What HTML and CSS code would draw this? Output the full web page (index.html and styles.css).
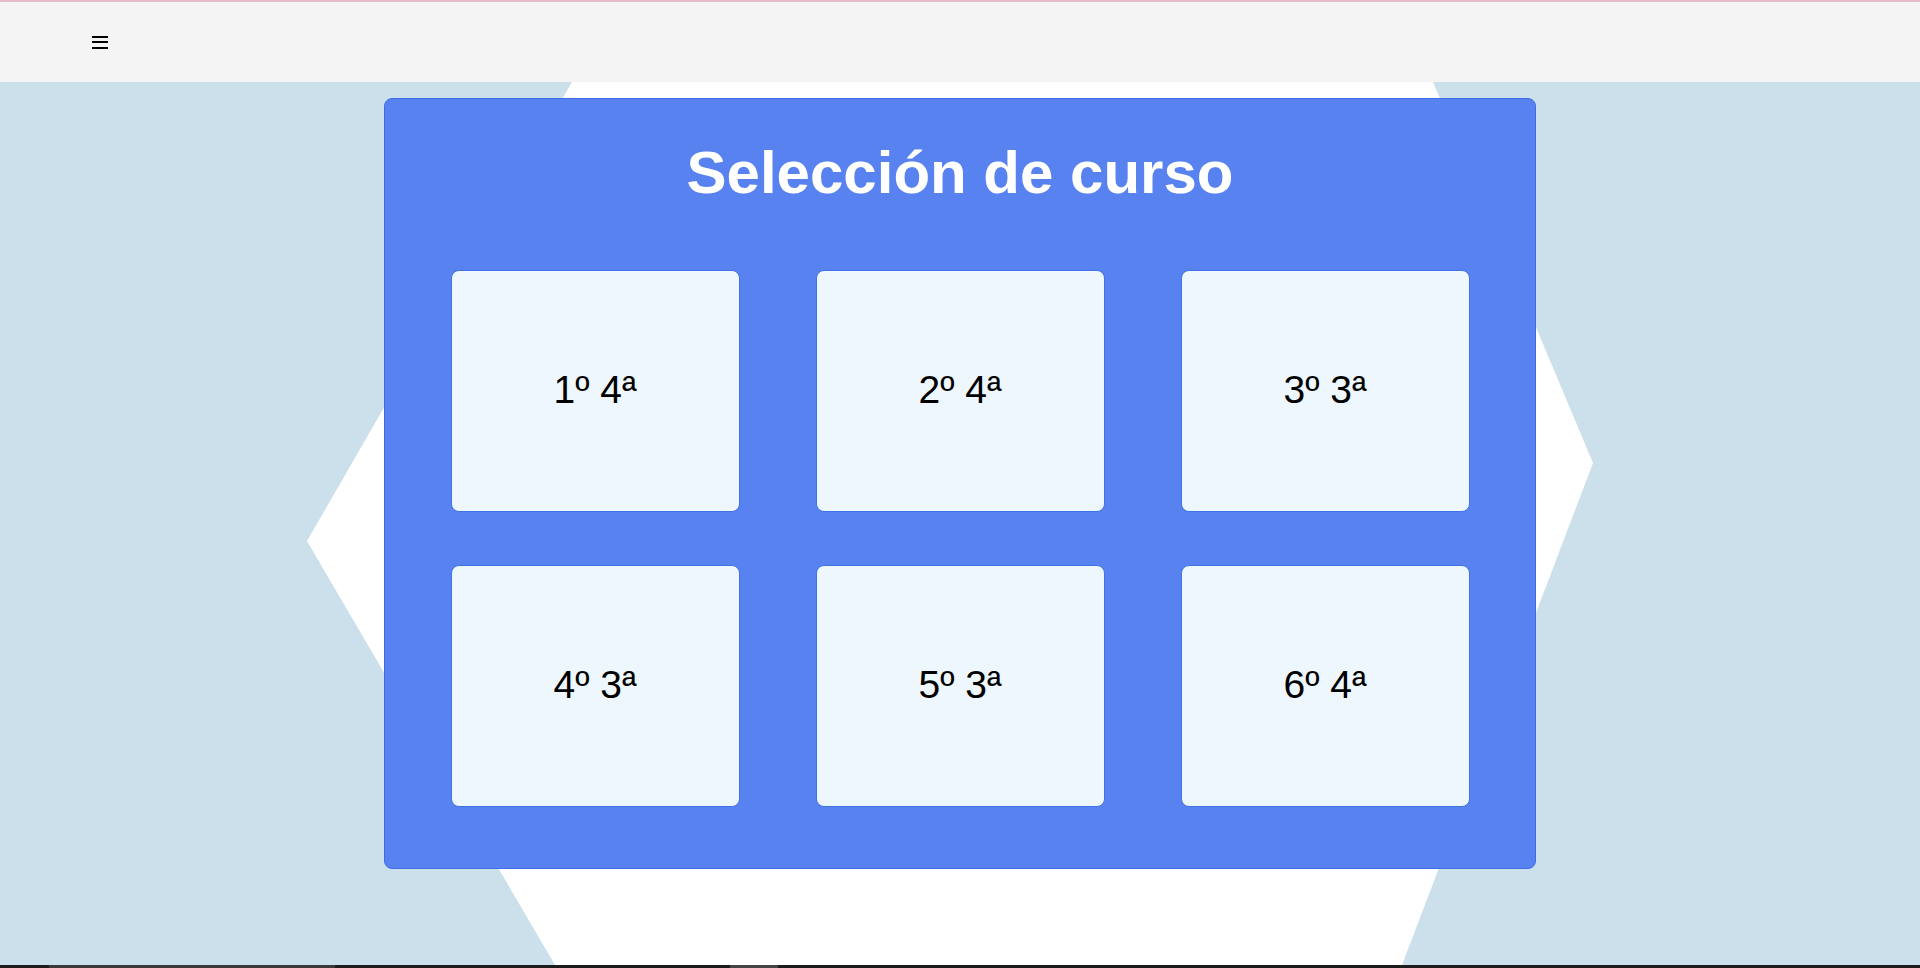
FILE: index.html
```html
<!DOCTYPE html>
<html lang="es">
<head>
<meta charset="utf-8">
<title>Selección de curso</title>
<link rel="stylesheet" href="styles.css">
</head>
<body>
<header class="topbar">
  <button class="menu-btn" aria-label="Menú">
    <svg width="16" height="13" viewBox="0 0 16 13"><rect x="0" y="0" width="16" height="2" fill="#000"/><rect x="0" y="5" width="16" height="2" fill="#000"/><rect x="0" y="11" width="16" height="2" fill="#000"/></svg>
  </button>
</header>
<main class="stage">
  <svg class="backdrop" width="1920" height="883" viewBox="0 0 1920 883" aria-hidden="true">
    <polygon points="572,0 1433,0 1593,381 1402,883 555,883 307,459" fill="#ffffff"/>
  </svg>
  <section class="panel">
    <h1 class="panel-title">Selección de curso</h1>
    <div class="grid">
      <a class="tile">1º 4ª</a>
      <a class="tile">2º 4ª</a>
      <a class="tile">3º 3ª</a>
      <a class="tile">4º 3ª</a>
      <a class="tile">5º 3ª</a>
      <a class="tile">6º 4ª</a>
    </div>
  </section>
</main>
<footer class="taskbar">
  <span class="seg seg-a"></span>
  <span class="seg seg-b"></span>
</footer>
</body>
</html>
```
FILE: styles.css
```css
* { box-sizing: border-box; }
html, body { margin: 0; padding: 0; }
body {
  width: 1920px;
  height: 968px;
  overflow: hidden;
  font-family: "Liberation Sans", Arial, sans-serif;
  background: #cce0ec;
}
.topbar {
  height: 82px;
  background: #f4f4f4;
  border-top: 2px solid #e4bccb;
  display: flex;
  align-items: center;
  padding-left: 92px;
}
.menu-btn {
  border: 0;
  background: none;
  padding: 0;
  margin: 0;
  width: 16px;
  height: 13px;
  display: block;
}
.menu-btn svg { display: block; }
.stage {
  position: relative;
  height: 883px;
  background: #cce0ec;
  padding-top: 16px;
  overflow: hidden;
}
.backdrop {
  position: absolute;
  left: 0;
  top: 0;
  z-index: 0;
}
.panel {
  position: relative;
  z-index: 1;
  width: 1152px;
  height: 771px;
  margin: 0 auto 0 384px;
  background: #5782f0;
  border: 1px solid #3d6ee8;
  border-radius: 8px;
  padding-top: 40px;
}
.panel-title {
  margin: 0;
  text-align: center;
  color: #ffffff;
  font-size: 60px;
  font-weight: bold;
  line-height: 67px;
}
.grid {
  margin-top: 64px;
  display: grid;
  grid-template-columns: repeat(3, 289px);
  grid-auto-rows: 242px;
  column-gap: 76px;
  row-gap: 53px;
  justify-content: center;
}
.tile {
  display: flex;
  align-items: center;
  justify-content: center;
  background: #eef7fe;
  border: 1px solid #3f72e8;
  border-radius: 8px;
  color: #000;
  font-size: 39px;
  text-decoration: none;
  padding-bottom: 2px;
}
.taskbar {
  height: 3px;
  background: #1c1c1c;
  display: flex;
}
.seg { display: block; height: 3px; }
.seg-a { margin-left: 49px; width: 286px; background: #3a3a3a; }
.seg-b { margin-left: 395px; width: 48px; background: #454545; }
```
